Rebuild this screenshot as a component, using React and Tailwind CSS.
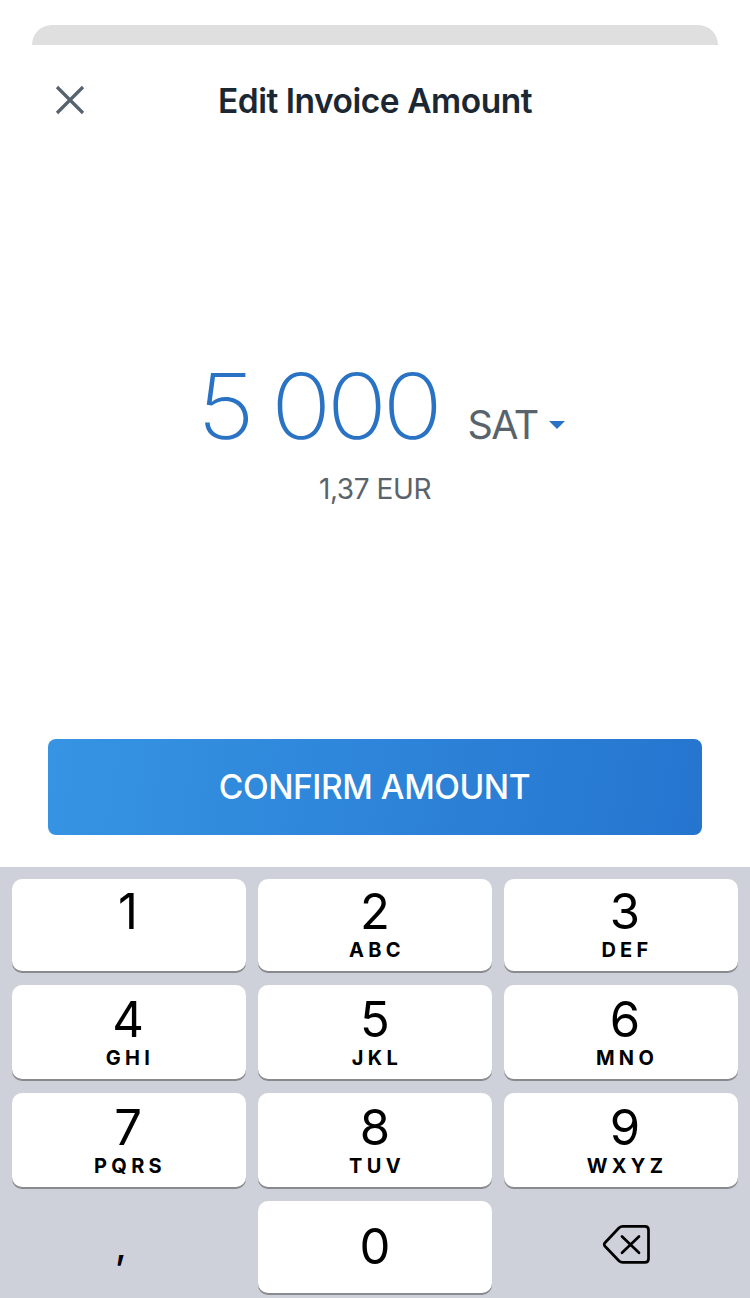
const KEYS = [
  { digit: '1', letters: '' },
  { digit: '2', letters: 'ABC' },
  { digit: '3', letters: 'DEF' },
  { digit: '4', letters: 'GHI' },
  { digit: '5', letters: 'JKL' },
  { digit: '6', letters: 'MNO' },
  { digit: '7', letters: 'PQRS' },
  { digit: '8', letters: 'TUV' },
  { digit: '9', letters: 'WXYZ' },
];

const KEY_BASE =
  'flex flex-col items-center rounded-[10px] bg-white text-black shadow-[0_2px_0_#898a8d]';

const COLUMN_SHIFT = ['pr-[2px]', '', 'pl-[8px]'];

function Key({ digit, letters, index }) {
  return (
    <button className={`${KEY_BASE} ${index < 3 ? 'pt-[8px]' : 'pt-[10px]'} ${COLUMN_SHIFT[index % 3]}`}>
      <span className="text-[49px] leading-[50px]">{digit}</span>
      <span className="mt-[1px] pl-[4px] text-[20px] leading-6 font-bold tracking-[4.3px]">
        {letters}
      </span>
    </button>
  );
}

function Keypad() {
  return (
    <div className="grid h-[431px] grid-cols-3 grid-rows-[92px_94px_94px_92px] gap-x-3 gap-y-[14px] bg-[#ced1d9] px-3 pt-3">
      {KEYS.map((key, i) => (
        <Key key={key.digit} {...key} index={i} />
      ))}
      <button className="flex items-center justify-center pr-[16px] pb-[3px] text-[38px] font-medium text-black">
        ,
      </button>
      <button className={`${KEY_BASE} justify-center`}>
        <span className="text-[49px] leading-[50px]">0</span>
      </button>
      <button className="flex items-start pt-[23px] pl-[98px]" aria-label="Delete">
        <svg width="50" height="42" viewBox="0 0 50 42" fill="none" stroke="#000" strokeLinecap="round" strokeLinejoin="round">
          <path
            strokeWidth="2.7"
            d="M20.8 2.4H43Q46.5 2.4 46.5 6V34.8Q46.5 38.4 43 38.4H20.8Q18.6 38.4 17.1 37L3 22.3Q1.5 20.5 3 18.7L17.1 3.8Q18.6 2.4 20.8 2.4Z"
          />
          <path strokeWidth="2.7" d="M21.5 12.5l17 16.2M38.5 12.5l-17 16.2" transform="translate(-1.5 0)" />
        </svg>
      </button>
    </div>
  );
}

export default function App() {
  return (
    <div className="flex h-[1298px] w-[750px] flex-col overflow-hidden bg-white font-['Inter',sans-serif]">
      <div className="mt-[25px] ml-8 h-5 w-[686px] rounded-t-[20px] bg-[#dfdfdf]" />
      <header className="grid h-[112px] grid-cols-[110px_1fr_110px] items-center">
        <button className="pb-[2px] pl-[55px]" aria-label="Close">
          <svg width="30" height="30" viewBox="0 0 30 30" fill="none" stroke="#56626d" strokeWidth="3.2">
            <path d="M2 2l26 26M28 2L2 28" />
          </svg>
        </button>
        <h1 className="text-center text-[33.5px] font-semibold tracking-[-0.48px] whitespace-nowrap text-[#1b2733]">
          Edit Invoice Amount
        </h1>
      </header>
      <main className="flex h-[582px] flex-col">
        <div className="mt-[194px] flex items-baseline pl-[197px] whitespace-nowrap">
          <span className="origin-left scale-x-[1.1] text-[91px] leading-[110px] font-[160] tracking-[-4.2px] text-[#2a72c3] [word-spacing:-2.6px]">
            5 000
          </span>
          <span className="ml-[51px] text-[39.5px] tracking-[-1.5px] text-[#59636c]">SAT</span>
          <svg className="ml-[11px] -translate-y-[10px]" width="16" height="8" viewBox="0 0 16 8" fill="#2a72c3">
            <path d="M0 0h16L8 8z" />
          </svg>
        </div>
        <p className="mt-[8px] text-center text-[28px] leading-[40px] tracking-[-0.4px] text-[#59636c]">1,37 EUR</p>
      </main>
      <div className="h-32 px-12">
        <button className="h-24 w-full rounded-lg bg-linear-[100deg] from-[#3694e3] to-[#2575cf] pr-[1px] text-[33.5px] font-medium tracking-[-0.45px] text-white">
          CONFIRM AMOUNT
        </button>
      </div>
      <Keypad />
    </div>
  );
}
